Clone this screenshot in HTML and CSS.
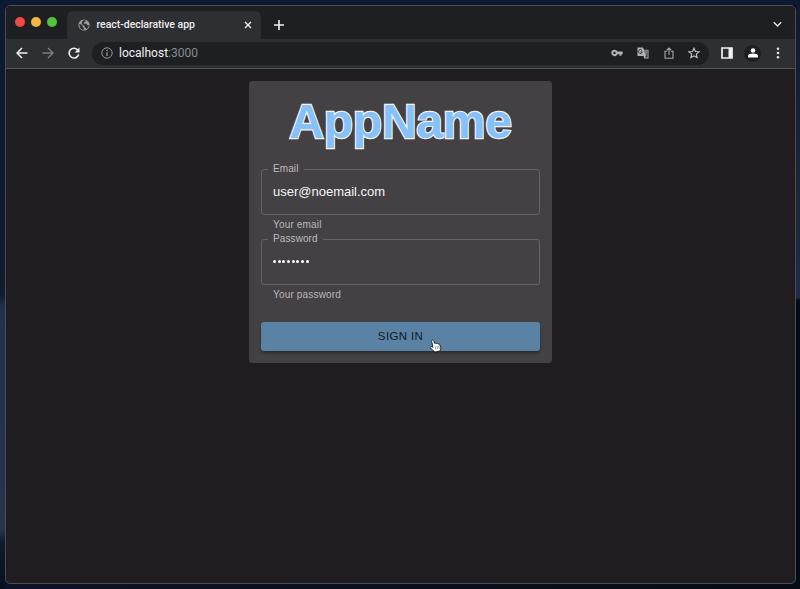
FILE: index.html
```html
<!DOCTYPE html>
<html lang="en">
<head>
<meta charset="utf-8">
<title>react-declarative app</title>
<link rel="stylesheet" href="styles.css">
</head>
<body>
<div class="window">
  <header class="tabbar">
    <div class="lights"><i class="light red"></i><i class="light amber"></i><i class="light green"></i></div>
    <div class="tab">
      <svg class="globe" viewBox="0 0 12 12"><circle cx="6" cy="6" r="5.6" fill="#9b9ca0"/><path d="M1.4 4.9l2 .6 1.3 1.3v1.3l1.1.9v1.7C3 10.700 1.300 8.500 1.400 4.900zM5.200 1.200h2.300v1.600l-1.600.8v1.200h2.400l1 1.300h1.400c0 2-1 3.500-2.400 4.200l-.5-1.500-1.200-.4V6.900L5 5.900 3.700 4.600l.2-1.400z" fill="#2e2f33"/></svg>
      <span class="tab-title">react-declarative app</span>
      <svg class="close" viewBox="0 0 8 8"><path d="M1 1l6 6M7 1L1 7" stroke="#eee" stroke-width="1.4"/></svg>
    </div>
    <svg class="plus" viewBox="0 0 10 10"><path d="M5 0v10M0 5h10" stroke="#f0f0f0" stroke-width="1.6"/></svg>
    <svg class="chevron" viewBox="0 0 8 6"><path d="M.7 1L4 4.300 7.300 1" fill="none" stroke="#e4e4e5" stroke-width="1.300"/></svg>
  </header>
  <nav class="toolbar">
    <svg class="back" viewBox="0 0 12 12"><path d="M11.500 6H1M6 1L1 6l5 5" fill="none" stroke="#f2f2f2" stroke-width="1.500"/></svg>
    <svg class="forward" viewBox="0 0 12 12"><path d="M.5 6H11M6 1l5 5-5 5" fill="none" stroke="#7d7e82" stroke-width="1.400"/></svg>
    <svg class="reload" viewBox="0 0 12 12"><path d="M10 3.200A4.900 4.900 0 1 0 10.700 7.600" fill="none" stroke="#f4f4f4" stroke-width="1.600"/><path d="M11.500.5v5H6.700z" fill="#f4f4f4"/></svg>
    <div class="address">
      <svg class="info" viewBox="0 0 12 12"><circle cx="6" cy="6" r="5.200" fill="none" stroke="#96979b"/><path d="M6 5.200v3.700M6 3v1.300" stroke="#a5a6a9" stroke-width="1.200"/></svg>
      <span class="url">localhost<span class="port">:3000</span></span>
      <svg class="key" viewBox="0 0 12 8"><path fill-rule="evenodd" d="M3.500.7a3.200 3.200 0 1 0 2.900 4.500h2v1.500h2V5.200h1.300V2.600H6.400A3.200 3.200 0 0 0 3.500.7zm0 2a1.200 1.200 0 1 1 0 2.400 1.200 1.200 0 0 1 0-2.400z" fill="#b3b3b6"/></svg>
      <svg class="translate" viewBox="0 0 12 12"><path d="M.5.5H6l1 2.300h4.500v8.700H7.300L6.500 9H.5z" fill="#b2b3b5"/><path d="M5 3.500A1.900 1.900 0 1 0 5.200 5H3.600" fill="none" stroke="#292a2d" stroke-width=".9"/><path d="M7.200 3.600h3.500v7H7.900l1-1.600-1.800-5.400" fill="#3b3c3f"/><path d="M7.500 5h3M9 4v1M10 5L8 7.700M8 6l2 2.500" fill="none" stroke="#b2b3b5" stroke-width=".7"/></svg>
      <svg class="share" viewBox="0 0 10 12"><path d="M3.200 4.300H1v7h8v-7H6.800M5 8V1M2.800 3.200L5 1l2.200 2.200" fill="none" stroke="#aaaaad" stroke-width="1.100"/></svg>
      <svg class="star" viewBox="0 0 12 12"><path d="M6 1.200l1.400 3.300 3.600.3-2.700 2.400.8 3.500L6 8.800l-3.100 1.900.8-3.500L1 4.800l3.600-.3z" fill="none" stroke="#c8c8ca" stroke-width="1.100"/></svg>
    </div>
    <svg class="panel" viewBox="0 0 12 12"><path d="M1 1h10v10H1z" fill="none" stroke="#f1f1f2" stroke-width="1.700"/><path d="M7.500 1H11v10H7.500z" fill="#f1f1f2"/></svg>
    <span class="avatar"><svg viewBox="0 0 10 10"><circle cx="5" cy="2.500" r="2.300" fill="#fff"/><path d="M0 9.500V8c0-3.200 10-3.200 10 0v1.500z" fill="#fff"/></svg></span>
    <svg class="more" viewBox="0 0 4 12"><g fill="#e4e4e5"><circle cx="2" cy="1.800" r="1.300"/><circle cx="2" cy="6" r="1.300"/><circle cx="2" cy="10.200" r="1.300"/></g></svg>
  </nav>
  <main class="page">
    <form class="card">
      <h1>AppName</h1>
      <fieldset class="field"><legend>Email</legend><span class="value">user@noemail.com</span></fieldset>
      <p class="helper">Your email</p>
      <fieldset class="field"><legend>Password</legend><span class="value dots"><i></i><i></i><i></i><i></i><i></i><i></i><i></i><i></i></span></fieldset>
      <p class="helper">Your password</p>
      <button type="button">SIGN IN
        <svg class="pointer" viewBox="0 0 12 14"><path d="M2 1.200C2.700.4 3.500.9 3.800 1.800l1 2.700c.6-.5 1.300-.3 1.600.2.500-.4 1.300-.2 1.600.4.800-.4 1.700 0 1.900.8l.9 2.900c.3 1-.3 1.800-.5 3l-5.300 1.300L1.200 9.800C.6 9 .4 8 1 7.700c.8-.4 1.500.2 2 .7L1.700 2.600c-.1-.5 0-1.100.3-1.400z" fill="#fff" stroke="#17191d" stroke-width=".9"/><path d="M5.200 7.500l.7 2.800M7 7.200l.7 2.800M8.700 7l.7 2.600" stroke="#555" stroke-width=".6"/></svg>
      </button>
    </form>
  </main>
</div>
</body>
</html>
```
FILE: styles.css
```css
* { box-sizing: border-box; }
body {
  margin: 0;
  width: 800px;
  height: 589px;
  padding: 5px 4px 5px 5px;
  overflow: hidden;
  font-family: "Liberation Sans", Arial, sans-serif;
  background:
    linear-gradient(#0e1a31, #0e1a31) 0 0 / 100% 5px no-repeat,
    linear-gradient(#0e1a31, #101b2e 50%, #22314b 52%, #26344c 90%, #101b2e 92%, #081020) 0 0 / 5px 100% no-repeat,
    linear-gradient(#0e1a31, #1d2c49 49%, #1d2c49 50.500%, #040b1a 51%, #050b18) 100% 0 / 4px 100% no-repeat,
    linear-gradient(90deg, #0a1426, #050b18);
}
svg { display: block; flex: none; }
.window {
  height: 579px;
  display: flex;
  flex-direction: column;
  border: 1px solid #4b4d50;
  border-radius: 5px;
  overflow: hidden;
  background: #1f1d20;
}
.tabbar {
  height: 33px;
  flex: none;
  display: flex;
  background: #1e1f22;
}
.lights { display: flex; gap: 6px; margin: 11px 0 0 9px; }
.light { width: 10px; height: 10px; border-radius: 50%; }
.red { background: #ee4b45; }
.amber { background: #f4b440; }
.green { background: #53c43c; }
.tab {
  width: 194px;
  height: 28px;
  margin: 5px 0 0 10px;
  padding: 0 9px 0 11px;
  display: flex;
  align-items: center;
  border-radius: 6px 6px 0 0;
  background: #2e2f33;
}
.globe { width: 12px; height: 12px; }
.tab-title {
  flex: 1;
  margin-left: 6.500px;
  font: 500 10.500px/14px Roboto, sans-serif;
  letter-spacing: -.03px;
  color: #ececed;
  white-space: nowrap;
}
.close { width: 8px; height: 8px; }
.plus { width: 10px; height: 10px; margin: 14px 0 0 13px; }
.chevron { width: 9px; height: 7px; margin: 15px 13px 0 auto; }
.toolbar {
  height: 30px;
  flex: none;
  display: flex;
  align-items: center;
  padding: 0 15px 1px 10px;
  background: #2e2f33;
  border-bottom: 1px solid #515254;
}
.back, .forward, .reload { width: 12px; height: 12px; }
.forward, .reload { margin-left: 14px; }
.address {
  width: 617px;
  height: 23px;
  margin-left: 12px;
  padding: 0 9px;
  display: flex;
  align-items: center;
  border-radius: 12px;
  background: #1e1f22;
}
.info { width: 12px; height: 12px; }
.url { flex: 1; margin-left: 6px; font: 12px/16px Roboto, sans-serif; color: #f1f1f1; }
.port { color: #8b8c8f; }
.key { width: 12px; height: 8px; }
.translate { width: 12px; height: 12px; margin-left: 14px; }
.share { width: 10px; height: 12px; margin-left: 15px; }
.star { width: 12px; height: 12px; margin-left: 14px; }
.panel { width: 12px; height: 12px; margin-left: 12px; }
.avatar {
  width: 17px;
  height: 17px;
  margin-left: 11px;
  display: grid;
  place-items: center;
  border-radius: 50%;
  background: #1d1e21;
}
.avatar svg { width: 10px; height: 10px; }
.more { width: 4px; height: 12px; margin-left: auto; }
.page { flex: 1; display: flex; justify-content: center; align-items: flex-start; padding-top: 12px; }
.card {
  width: 303px;
  height: 282px;
  padding: 12px;
  display: flex;
  flex-direction: column;
  border-radius: 3px;
  background: #434144;
}
h1 {
  margin: 0;
  height: 70px;
  text-align: center;
  font-size: 48px;
  line-height: 58px;
  letter-spacing: -.2px;
  color: #86c1fa;
  -webkit-text-stroke: 2.400px #f3f3f3;
  paint-order: stroke fill;
}
.field {
  height: 52px;
  min-width: 0;
  margin: 0;
  padding: 0 11px;
  border: 1px solid #636265;
  border-radius: 3px;
}
legend {
  height: 12px;
  margin-left: -5px;
  padding: 0 5px;
  font-size: 10px;
  line-height: 12px;
  letter-spacing: .1px;
  color: #bdbbbe;
}
.value { display: block; height: 16px; margin-top: 9px; font-size: 13px; line-height: 16px; color: #f5f5f5; }
.dots { display: flex; align-items: center; gap: 1.700px; margin-top: 8px; }
.dots i { width: 3px; height: 3px; border-radius: 50%; background: #fff; }
.helper {
  height: 18px;
  margin: 0;
  padding: 3px 12px 0;
  font-size: 10px;
  line-height: 14px;
  letter-spacing: .17px;
  color: #b9b7ba;
}
button {
  position: relative;
  height: 29px;
  margin: auto 0 0;
  padding: 0;
  border: 0;
  border-radius: 3px;
  font: 11.500px/29px "Liberation Sans", Arial, sans-serif;
  letter-spacing: .35px;
  color: #101a25;
  background: #5a82a5;
  box-shadow: 0 2px 3px rgba(0, 0, 0, .35);
}
.pointer { position: absolute; left: 169px; top: 17px; width: 12px; height: 14px; }
```
